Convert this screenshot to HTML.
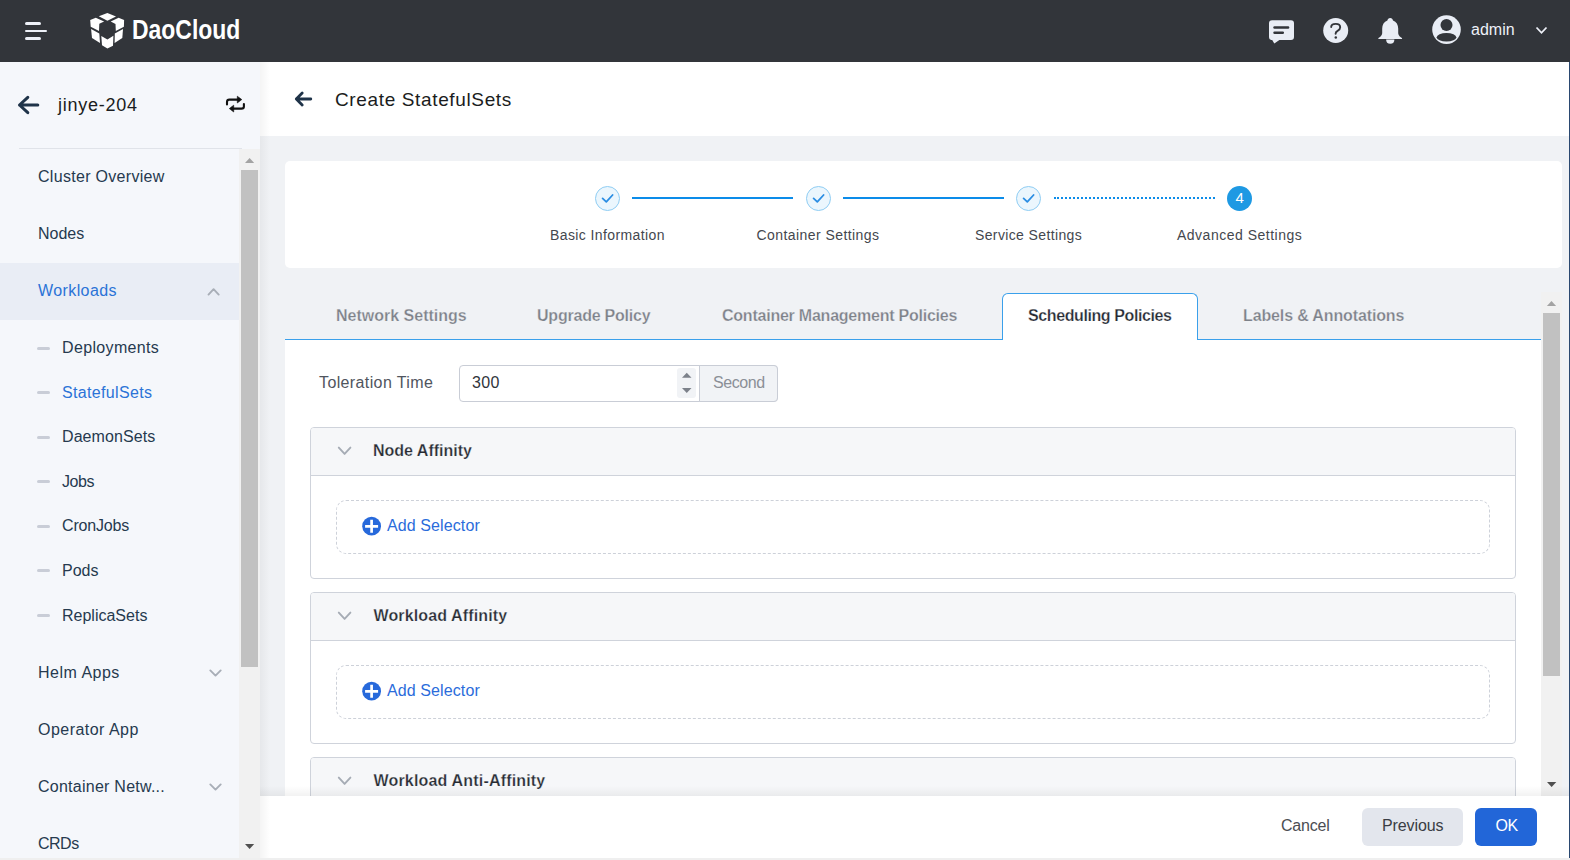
<!DOCTYPE html>
<html><head><meta charset="utf-8">
<style>
*{box-sizing:border-box;margin:0;padding:0}
html,body{width:1570px;height:860px;overflow:hidden;background:#efefef;font-family:"Liberation Sans",sans-serif}
.a{position:absolute}
.t{position:absolute;white-space:nowrap;line-height:1}
svg{position:absolute;overflow:visible}
#hdr{left:0;top:0;width:1570px;height:62px;background:#32353a}
#side{left:0;top:62px;width:260px;height:796px;background:#f5f7fb}
#mhead{left:260px;top:62px;width:1309px;height:74px;background:#fff}
#mbg{left:260px;top:136px;width:1309px;height:722px;background:#f0f2f5}
#rline{left:1569px;top:62px;width:1px;height:796px;background:#2a4870}
.side-t{font-size:16px;color:#263a4f}
.sub-dash{position:absolute;left:37px;width:13px;height:3px;border-radius:1.5px;background:#c9cdd7}
.sb-track{position:absolute;background:#f1f1f1}
.sb-thumb{position:absolute;background:#c1c1c1}
.card{left:285px;top:161px;width:1277px;height:107px;background:#fff;border-radius:5px}
.stepc{position:absolute;width:25px;height:25px;border-radius:50%;border:1px solid #8fcdf3;background:#ebf6fd;top:186px}
.stepl{font-size:14px;color:#44474e;letter-spacing:0.4px}
.sline{position:absolute;top:197px;height:2px;background:#0c8ce9}
.tab-t{font-size:16px;font-weight:700;color:#7d8189;-webkit-text-stroke:0.25px #f0f2f5}
.panel{position:absolute;left:310px;width:1206px;border:1px solid #cfd3db;border-radius:4px;background:#fff;overflow:hidden}
.phead{position:absolute;left:0;top:0;width:100%;height:48px;background:#f6f7f9;border-bottom:1px solid #cfd3db}
.dash{position:absolute;left:25px;right:25px;top:72px;height:54px;border:1px dashed #cdd1d9;border-radius:10px}
.ptitle{font-size:16px;font-weight:700;color:#272b33;-webkit-text-stroke:0.25px #f6f7f9}
.addsel{font-size:16px;color:#2b6cdb;letter-spacing:0.1px}
</style></head><body>
<!-- HEADER -->
<div id="hdr" class="a"></div>
<div class="a" style="left:25px;top:22px;width:16px;height:3px;border-radius:2px;background:#eef1f8"></div>
<div class="a" style="left:25px;top:29.6px;width:22.2px;height:2.6px;border-radius:1px;background:#eef1f8"></div>
<div class="a" style="left:25px;top:37px;width:16px;height:3px;border-radius:2px;background:#eef1f8"></div>
<svg style="left:86px;top:10px" width="42" height="40" viewBox="0 0 42 40">
<g fill="#fff">
<polygon points="12.8,6.3 21.4,2.9 30,6.5 21.4,10.7"/>
<polygon points="4.2,10 9.8,7.7 18.1,11.4 13.3,13.7 13,20.9 4.7,16.7"/>
<polygon points="24.7,11.4 32.6,7.7 38.1,10 37.9,16.7 29.8,20.9 29.5,14"/>
<polygon points="5.1,19.1 13.3,23.5 14,33 6,27.9"/>
<polygon points="28.8,23.5 37,19.1 36.3,28.1 28.6,33"/>
<polygon points="15.3,26 21.4,29.5 27.4,25.8 27,35.8 21.4,38.6 16,35.3"/>
</g></svg>
<div class="t" style="left:132px;top:16.6px;font-size:27px;font-weight:700;color:#fff;transform:scaleX(0.85);transform-origin:0 0">DaoCloud</div>

<!-- header right icons -->
<svg style="left:1260px;top:10px" width="100" height="40" viewBox="0 0 100 40">
<path d="M12,10.2 H31 Q34,10.2 34,13.2 V27 Q34,30 31,30 H19.4 L14.3,33.6 L12.2,30 Q9,30 9,27 V13.2 Q9,10.2 12,10.2 Z" fill="#e9edf5"/>
<rect x="13.3" y="16.3" width="16" height="2.5" rx="1.2" fill="#32353a"/>
<rect x="13.3" y="21.4" width="10.7" height="2.5" rx="1.2" fill="#32353a"/>
<circle cx="75.7" cy="20.5" r="12.5" fill="#e9edf5"/>
<path d="M71.2,17 Q71.2,13.9 75.8,13.9 Q80.2,13.9 80.2,17.3 Q80.2,19.5 77.6,20.9 Q75.6,22 75.6,23.8" fill="none" stroke="#32353a" stroke-width="1.9" stroke-linecap="round"/>
<circle cx="75.8" cy="27.6" r="1.25" fill="#32353a"/>
</svg>
<svg style="left:1370px;top:10px" width="40" height="40" viewBox="0 0 40 40">
<path d="M20.2,7.9 C21.8,7.9 22.7,8.9 23,10.4 C26.4,11.6 28.2,14.6 28.2,18.6 L28.2,23.2 C28.2,25.4 30.6,27.2 31.9,28.1 Q32.4,28.6 31.9,28.9 H8.5 Q8,28.6 8.5,28.1 C9.8,27.2 12.2,25.4 12.2,23.2 L12.2,18.6 C12.2,14.6 14,11.6 17.4,10.4 C17.7,8.9 18.6,7.9 20.2,7.9 Z" fill="#e9edf5"/>
<path d="M16.1,29.6 H24.4 Q24.4,33.8 20.25,33.8 Q16.1,33.8 16.1,29.6 Z" fill="#e9edf5"/>
</svg>
<svg style="left:1420px;top:10px" width="60" height="40" viewBox="0 0 60 40">
<circle cx="26.5" cy="19.6" r="14.3" fill="#e9edf5"/>
<circle cx="26.5" cy="15" r="6" fill="#32353a"/>
<ellipse cx="26.5" cy="27.2" rx="9.8" ry="4.3" fill="#32353a"/>
</svg>
<div class="t" style="left:1471px;top:21.5px;font-size:16px;color:#eef1f8">admin</div>
<svg style="left:1530px;top:20px" width="24" height="20" viewBox="0 0 24 20">
<path d="M6.5,7.5 L11.5,12.8 L16.5,7.5" fill="none" stroke="#eef1f8" stroke-width="1.8"/>
</svg>

<!-- SIDEBAR -->
<div id="side" class="a"></div>
<svg style="left:10px;top:90px" width="40" height="30" viewBox="0 0 40 30">
<path d="M27.8,15 H9.5 M17.8,7.3 L9.5,15 L17.8,22.7" fill="none" stroke="#1f3349" stroke-width="3" stroke-linecap="round" stroke-linejoin="round"/>
</svg>
<div class="t" style="left:58px;top:96px;font-size:18px;color:#1a1c20;letter-spacing:0.75px">jinye-204</div>
<svg style="left:220px;top:90px" width="30" height="30" viewBox="0 0 30 30">
<path d="M7,14.5 V11.9 Q7,9.6 9.4,9.6 H18" fill="none" stroke="#111" stroke-width="2.1" stroke-linecap="round"/>
<polygon points="17.3,6.2 17.3,13 21.8,9.6" fill="#111" stroke="#111" stroke-width="0.6" stroke-linejoin="round"/>
<path d="M23.9,14 V16.4 Q23.9,18.6 21.5,18.6 H13" fill="none" stroke="#111" stroke-width="2.1" stroke-linecap="round"/>
<polygon points="13.7,15.2 13.7,22 9.3,18.6" fill="#111" stroke="#111" stroke-width="0.6" stroke-linejoin="round"/>
</svg>
<div class="a" style="left:19px;top:148px;width:223px;height:1px;background:#e0e3e9"></div>

<!-- sidebar menu -->
<div class="t side-t" style="left:38px;top:168.5px;letter-spacing:0.3px">Cluster Overview</div>
<div class="t side-t" style="left:38px;top:225.5px">Nodes</div>
<div class="a" style="left:0;top:263px;width:239px;height:57px;background:#e9edf5"></div>
<div class="t side-t" style="left:38px;top:283px;color:#2b73d7;letter-spacing:0.4px">Workloads</div>
<svg style="left:200px;top:280px" width="30" height="20" viewBox="0 0 30 20">
<path d="M8.5,14.6 L13.6,9.2 L18.7,14.6" fill="none" stroke="#a8aeb7" stroke-width="1.9" stroke-linecap="round" stroke-linejoin="round"/>
</svg>

<div class="sub-dash" style="top:346.7px"></div>
<div class="t side-t" style="left:62px;top:339.7px;letter-spacing:0.35px">Deployments</div>
<div class="sub-dash" style="top:391px"></div>
<div class="t side-t" style="left:62px;top:384.7px;color:#2b73d7;letter-spacing:0.33px">StatefulSets</div>
<div class="sub-dash" style="top:435.9px"></div>
<div class="t side-t" style="left:62px;top:429px;letter-spacing:0.08px">DaemonSets</div>
<div class="sub-dash" style="top:480.4px"></div>
<div class="t side-t" style="left:62px;top:473.5px;letter-spacing:-0.4px">Jobs</div>
<div class="sub-dash" style="top:524.6px"></div>
<div class="t side-t" style="left:62px;top:517.8px;letter-spacing:-0.17px">CronJobs</div>
<div class="sub-dash" style="top:569.4px"></div>
<div class="t side-t" style="left:62px;top:562.5px">Pods</div>
<div class="sub-dash" style="top:614.1px"></div>
<div class="t side-t" style="left:62px;top:608px">ReplicaSets</div>

<div class="t side-t" style="left:38px;top:665px;letter-spacing:0.5px">Helm Apps</div>
<svg style="left:200px;top:662px" width="30" height="20" viewBox="0 0 30 20">
<path d="M10.3,8.4 L15.5,13.6 L20.7,8.4" fill="none" stroke="#a8aeb7" stroke-width="1.9" stroke-linecap="round" stroke-linejoin="round"/>
</svg>
<div class="t side-t" style="left:38px;top:722px;letter-spacing:0.47px">Operator App</div>
<div class="t side-t" style="left:38px;top:778.8px;letter-spacing:0.25px">Container Netw...</div>
<svg style="left:200px;top:776px" width="30" height="20" viewBox="0 0 30 20">
<path d="M10.3,8.4 L15.5,13.6 L20.7,8.4" fill="none" stroke="#a8aeb7" stroke-width="1.9" stroke-linecap="round" stroke-linejoin="round"/>
</svg>
<div class="t side-t" style="left:38px;top:836.3px;letter-spacing:-0.5px">CRDs</div>

<!-- sidebar scrollbar -->
<div class="sb-track" style="left:239px;top:149px;width:21px;height:709px"></div>
<svg style="left:239px;top:149px" width="21" height="20" viewBox="0 0 21 20"><polygon points="6,14 15.2,14 10.6,9" fill="#a3a3a3"/></svg>
<div class="sb-thumb" style="left:241px;top:170px;width:17px;height:497px"></div>
<svg style="left:239px;top:838px" width="21" height="20" viewBox="0 0 21 20"><polygon points="6,6 15.2,6 10.6,11" fill="#505050"/></svg>

<!-- MAIN -->
<div id="mhead" class="a"></div>
<div id="mbg" class="a"></div>
<div id="rline" class="a"></div>
<svg style="left:290px;top:85px" width="30" height="30" viewBox="0 0 30 30">
<path d="M20.8,14 H6.3 M12.2,8 L6.3,14 L12.2,20" fill="none" stroke="#1f3349" stroke-width="2.8" stroke-linecap="round" stroke-linejoin="round"/>
</svg>
<div class="t" style="left:335px;top:89.5px;font-size:19px;color:#1a1c20;letter-spacing:0.64px">Create StatefulSets</div>

<!-- steps card -->
<div class="card a"></div>
<div class="stepc" style="left:595px"></div>
<div class="stepc" style="left:806px"></div>
<div class="stepc" style="left:1016px"></div>
<div class="a" style="left:1227px;top:186px;width:25px;height:25px;border-radius:50%;background:#1e99e3"></div>
<div class="t" style="left:1235.6px;top:190.2px;font-size:15px;color:#fff">4</div>
<svg style="left:590px;top:186px" width="700" height="25" viewBox="0 0 700 25">
<g fill="none" stroke="#2a8de3" stroke-width="1.8" stroke-linecap="round" stroke-linejoin="round">
<path d="M12.6,12.4 L16.3,15.8 L22.6,9"/>
<path d="M223.6,12.4 L227.3,15.8 L233.6,9"/>
<path d="M433.6,12.4 L437.3,15.8 L443.6,9"/>
</g></svg>
<div class="sline" style="left:632px;width:161px"></div>
<div class="sline" style="left:843px;width:161px"></div>
<div class="a" style="left:1054px;top:197px;width:161px;height:0;border-top:2px dotted #0c8ce9"></div>
<div class="t stepl" style="left:550px;top:228px">Basic Information</div>
<div class="t stepl" style="left:756.5px;top:228px;letter-spacing:0.43px">Container Settings</div>
<div class="t stepl" style="left:975px;top:228px;letter-spacing:0.37px">Service Settings</div>
<div class="t stepl" style="left:1177px;top:228px;letter-spacing:0.5px">Advanced Settings</div>

<!-- tabs -->
<div class="a" style="left:285px;top:339px;width:1256px;height:1px;background:#3aa0eb"></div>
<div class="a" style="left:285px;top:340px;width:1256px;height:456px;background:#fff"></div>
<div class="a" style="left:1002px;top:293px;width:196px;height:47px;border:1px solid #3aa0eb;border-bottom:none;border-radius:6px 6px 0 0;background:#fff"></div>
<div class="t tab-t" style="left:336px;top:307.5px">Network Settings</div>
<div class="t tab-t" style="left:537px;top:307.5px;letter-spacing:-0.22px">Upgrade Policy</div>
<div class="t tab-t" style="left:722px;top:307.5px;letter-spacing:-0.23px">Container Management Policies</div>
<div class="t tab-t" style="left:1028px;top:307.5px;letter-spacing:-0.4px;color:#252a33;-webkit-text-stroke:0.25px #fff">Scheduling Policies</div>
<div class="t tab-t" style="left:1243px;top:307.5px;letter-spacing:-0.13px">Labels &amp; Annotations</div>

<!-- toleration -->
<div class="t" style="left:319px;top:374.5px;font-size:16px;color:#50555e;letter-spacing:0.38px">Toleration Time</div>
<div class="a" style="left:459px;top:365px;width:319px;height:37px;border:1px solid #c9cdd6;border-radius:4px;background:#fff"></div>
<div class="a" style="left:699px;top:365px;width:79px;height:37px;border:1px solid #c9cdd6;border-radius:0 4px 4px 0;background:#f1f3f6"></div>
<div class="a" style="left:677px;top:368px;width:19px;height:30px;border-radius:3px;background:#f1f3f6"></div>
<svg style="left:677px;top:368px" width="19" height="30" viewBox="0 0 19 30"><polygon points="5,9.8 14.5,9.8 9.75,4.8" fill="#7c818a"/><polygon points="5,20 14.5,20 9.75,25" fill="#7c818a"/></svg>
<div class="t" style="left:472px;top:374.5px;font-size:16px;color:#30343b;letter-spacing:0.4px">300</div>
<div class="t" style="left:713px;top:374.5px;font-size:16px;color:#8b8f97;letter-spacing:-0.4px">Second</div>

<!-- panels -->
<div class="panel" style="top:427px;height:152px">
  <div class="phead"></div>
  <div class="dash"></div>
</div>
<div class="panel" style="top:592px;height:152px">
  <div class="phead"></div>
  <div class="dash"></div>
</div>
<div class="panel" style="top:757px;height:100px">
  <div class="phead"></div>
</div>
<svg style="left:330px;top:440px" width="30" height="400" viewBox="0 0 30 400">
<g fill="none" stroke="#a6acb5" stroke-width="1.9" stroke-linecap="round" stroke-linejoin="round">
<path d="M8.8,7.6 L14.6,13.9 L20.4,7.6"/>
<path d="M8.8,172.6 L14.6,178.9 L20.4,172.6"/>
<path d="M8.8,337.6 L14.6,343.9 L20.4,337.6"/>
</g></svg>
<div class="t ptitle" style="left:373px;top:442.5px">Node Affinity</div>
<div class="t ptitle" style="left:373.5px;top:607.5px;letter-spacing:0.13px">Workload Affinity</div>
<div class="t ptitle" style="left:373.5px;top:772.5px;letter-spacing:0.18px">Workload Anti-Affinity</div>

<svg style="left:360px;top:515px" width="24" height="200" viewBox="0 0 24 200">
<g>
<circle cx="11.6" cy="11.2" r="9.4" fill="#2769db"/>
<path d="M11.6,4.8 V17.8 M5.1,11.3 H18.1" stroke="#fff" stroke-width="2.7"/>
<circle cx="11.6" cy="176.2" r="9.4" fill="#2769db"/>
<path d="M11.6,169.8 V182.8 M5.1,176.3 H18.1" stroke="#fff" stroke-width="2.7"/>
</g></svg>
<div class="t addsel" style="left:387px;top:517.5px">Add Selector</div>
<div class="t addsel" style="left:387px;top:682.5px">Add Selector</div>

<!-- main scrollbar -->
<div class="sb-track" style="left:1541px;top:292px;width:21px;height:504px"></div>
<svg style="left:1541px;top:292px" width="21" height="20" viewBox="0 0 21 20"><polygon points="5.9,14 15.1,14 10.5,9" fill="#a3a3a3"/></svg>
<div class="sb-thumb" style="left:1543px;top:313px;width:17px;height:363px"></div>
<svg style="left:1541px;top:776px" width="21" height="20" viewBox="0 0 21 20"><polygon points="6,6 15.3,6 10.6,11" fill="#505050"/></svg>

<!-- footer -->
<div class="a" style="left:260px;top:786px;width:1309px;height:10px;background:linear-gradient(to bottom,rgba(0,0,0,0),rgba(0,0,0,0.05))"></div>
<div class="a" style="left:260px;top:796px;width:1309px;height:62px;background:#fff"></div>
<div class="t" style="left:1281px;top:817.5px;font-size:16px;color:#4b4d52;letter-spacing:-0.2px">Cancel</div>
<div class="a" style="left:1362px;top:808px;width:101px;height:38px;border-radius:6px;background:#e3e6ed"></div>
<div class="t" style="left:1382px;top:817.5px;font-size:16px;color:#3a3d44;letter-spacing:-0.1px">Previous</div>
<div class="a" style="left:1475px;top:808px;width:62px;height:38px;border-radius:6px;background:#2266d8"></div>
<div class="t" style="left:1495.5px;top:817.5px;font-size:16px;color:#fff;letter-spacing:-0.5px">OK</div>
<div class="a" style="left:260px;top:62px;width:10px;height:796px;background:linear-gradient(to right,rgba(0,0,0,0.045),rgba(0,0,0,0))"></div>
</body></html>
